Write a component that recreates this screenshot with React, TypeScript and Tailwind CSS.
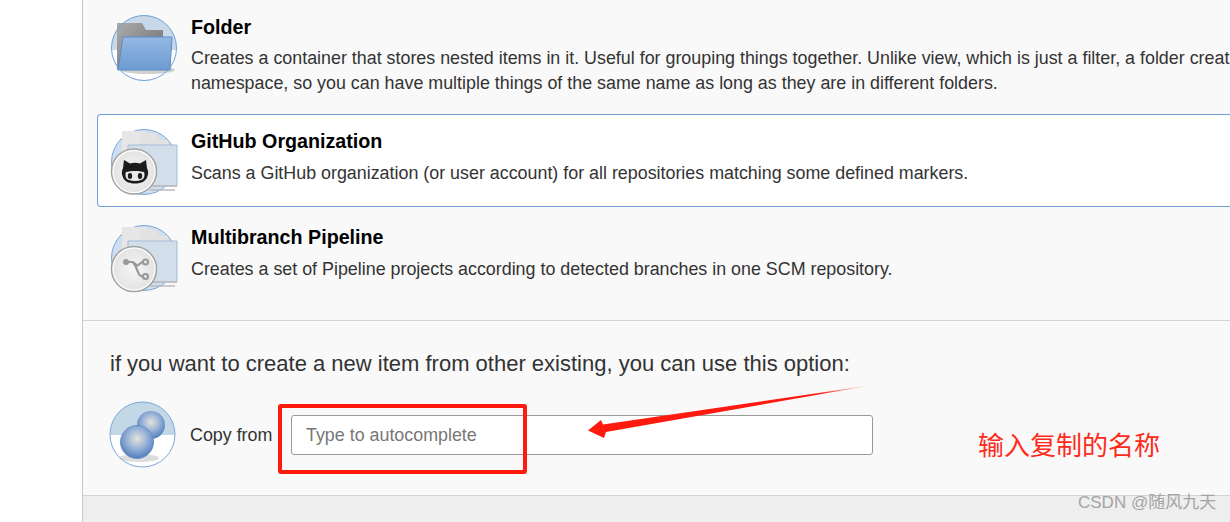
const FONT = "font-['Liberation_Sans',Arial,sans-serif]";

function FolderIcon() {
  return (
    <svg width="68" height="68" viewBox="0 0 68 68">
      <defs>
        <linearGradient id="fold" x1="0" y1="0" x2="0" y2="1">
          <stop offset="0" stopColor="#94b8e2" />
          <stop offset="1" stopColor="#6d9bd2" />
        </linearGradient>
        <linearGradient id="back" x1="0" y1="0" x2="1" y2="1">
          <stop offset="0" stopColor="#ababab" />
          <stop offset="1" stopColor="#6a6a6a" />
        </linearGradient>
        <clipPath id="c1"><circle cx="34" cy="34" r="32.5" /></clipPath>
      </defs>
      <circle cx="34" cy="34" r="32.5" fill="#fff" />
      <rect x="1" y="1" width="66" height="35" fill="#c9d8e8" clipPath="url(#c1)" />
      <ellipse cx="38" cy="56" rx="27" ry="4" fill="#d0d0d0" />
      <path d="M7 9h25l4 7h17v8H16L12 56H7z" fill="url(#back)" />
      <path d="M13 23h49l-2 33H8z" fill="url(#fold)" stroke="#5b8cc6" />
      <circle cx="34" cy="34" r="32.5" fill="none" stroke="#6f9fd3" />
    </svg>
  );
}

function BadgeFolder({ id, cy, children }: { id: string; cy: number; children: React.ReactNode }) {
  return (
    <svg width="70" height="70" viewBox="0 0 70 70">
      <defs>
        <radialGradient id={id} cx="0.5" cy="0.5" r="0.6">
          <stop offset="0" stopColor="#f6f6f6" />
          <stop offset="1" stopColor="#e0e0e0" />
        </radialGradient>
      </defs>
      <circle cx="34" cy="34" r="32.5" fill="#cfdff0" stroke="#7aa6d6" />
      <rect x="12" y="3" width="24" height="26" fill="#e6e6e6" />
      <path d="M30 5h15l5 7h8v20H30z" fill="#e2e2e2" />
      <path d="M18 17h49v41H18z" fill="#d3deeb" stroke="#a4bcd8" />
      <path d="M40 58h27M40 62h25" stroke="#bbb" strokeWidth="1.5" />
      <circle cx="24" cy={cy} r="22.500" fill="#fff" stroke="#a2a2a2" strokeWidth="1.500" />
      <circle cx="24" cy={cy} r="20.500" fill={`url(#${id})`} />
      {children}
    </svg>
  );
}

function SpheresIcon() {
  return (
    <svg width="67" height="67" viewBox="0 0 67 67" className="-ml-px shrink-0">
      <defs>
        <radialGradient id="ball" cx="0.5" cy="0.4" r="0.6">
          <stop offset="0" stopColor="#e4e4da" />
          <stop offset="0.5" stopColor="#9ab4d8" />
          <stop offset="1" stopColor="#4f7dbd" />
        </radialGradient>
        <clipPath id="c2"><circle cx="33.5" cy="33.5" r="32.5" /></clipPath>
      </defs>
      <circle cx="33.5" cy="33.5" r="32.5" fill="#fff" />
      <rect x="0" y="0" width="67" height="34" fill="#c3d8e6" clipPath="url(#c2)" />
      <ellipse cx="30" cy="57" rx="20" ry="4" fill="#ddd" />
      <circle cx="42" cy="24" r="14" fill="url(#ball)" />
      <circle cx="28" cy="41" r="16.5" fill="url(#ball)" stroke="#6d93c8" />
      <circle cx="33.5" cy="33.5" r="32.5" fill="none" stroke="#7aa6d6" />
    </svg>
  );
}

function Row({
  icon,
  title,
  selected,
  className,
  iconClass,
  descClass,
  children,
}: {
  icon: React.ReactNode;
  title: string;
  selected?: boolean;
  className: string;
  iconClass: string;
  descClass: string;
  children: React.ReactNode;
}) {
  return (
    <div
      className={`flex ${className} ${
        selected ? 'rounded-l-[4px] border border-r-0 border-[#6f9fd3] bg-white pl-[12px]' : 'pl-[13px]'
      }`}
    >
      <div className={`h-[70px] w-[81px] shrink-0 ${iconClass}`}>{icon}</div>
      <div className="min-w-0 flex-1 overflow-hidden whitespace-nowrap">
        <div className="text-[19.7px] leading-[24px] font-bold text-black">{title}</div>
        <div className={`text-[17.88px] leading-[25px] text-[#333] ${descClass}`}>{children}</div>
      </div>
    </div>
  );
}

export default function App() {
  return (
    <div className={`relative flex h-[522px] w-[1230px] overflow-hidden bg-white ${FONT}`}>
      <div className="w-[83px] shrink-0 border-r border-[#c8c8c8]" />
      <div className="flex min-w-0 flex-1 flex-col bg-[#f9f9f9]">
        <div className="h-[321px] border-b border-[#d3d3d3] pl-[14px]">
          <Row className="h-[114px] pt-[15px]" iconClass="-mt-[1px]" descClass="mt-[7px]" title="Folder" icon={<FolderIcon />}>
            <div className="overflow-hidden">
              Creates a container that stores nested items in it. Useful for grouping things together. Unlike view, which is just a filter, a folder creat
            </div>
            namespace, so you can have multiple things of the same name as long as they are in different folders.
          </Row>
          <Row selected className="h-[93px] pt-[14px]" iconClass="-mt-[1px]" descClass="mt-[8px]" title="GitHub Organization"
            icon={
              <BadgeFolder id="gh" cy={43.5}>
                {/* octocat head */}
                <path
                  d="M14 32l6 3.500c3-1 7-1 10 0l6-3.500 1 8c1.500 3 1.500 6 .5 8-1 5-6 7.500-12.500 7.500S13.500 53 12.500 48c-1-2-1-5 .5-8z"
                  fill="#1c1c1c"
                />
                <path d="M16 44c5-1.500 13-1.500 18 0 1.500 4-.5 8-3 8-3.500 1.200-8.500 1.200-12 0-2.500 0-4.500-4-3-8z" fill="#e8e8e8" />
                <ellipse cx="20" cy="48" rx="2.200" ry="3" fill="#1c1c1c" />
                <ellipse cx="30" cy="48" rx="2.200" ry="3" fill="#1c1c1c" />
              </BadgeFolder>
            }
          >
            Scans a GitHub organization (or user account) for all repositories matching some defined markers.
          </Row>
          <Row className="h-[113px] pt-[18px]" iconClass="-mt-[1px]" descClass="mt-[8px]" title="Multibranch Pipeline"
            icon={
              <BadgeFolder id="mb" cy={45}>
                <g fill="none" stroke="#999" strokeWidth="2.200">
                  <path d="M16 38h6c3 0 3.500 3 5 3.500 2 .5 3-3.500 6-3.500" />
                  <path d="M22 38c3 1 4 6 6 10 1 3 3 4.500 5 4.500" />
                  <circle cx="35.500" cy="38" r="2.500" />
                  <circle cx="35.500" cy="52.500" r="2.500" />
                </g>
                <circle cx="16" cy="38" r="3" fill="#999" />
              </BadgeFolder>
            }
          >
            Creates a set of Pipeline projects according to detected branches in one SCM repository.
          </Row>
        </div>
        <div className="h-[175px] border-b border-[#d3d3d3] pt-[30px] pl-[27px]">
          <div className="text-[22px] leading-[26px] text-[#333]">
            if you want to create a new item from other existing, you can use this option:
          </div>
          <div className="mt-[24px] flex items-center">
            <SpheresIcon />
            <span className="ml-[14px] w-[101px] text-[17.88px] leading-[24px] text-[#333]">Copy from</span>
            <div className="flex h-[40px] w-[582px] items-center rounded-[3px] border border-[#999] bg-white pt-px pl-[14px] text-[17.88px] text-[#777]">
              Type to autocomplete
            </div>
          </div>
        </div>
        <div className="flex-1 bg-[#eeeeee]" />
      </div>

      {/* red annotations pasted over the screenshot */}
      <div className="absolute top-[404px] left-[278px] h-[70px] w-[249px] rounded-[3px] border-[4px] border-[#ff1a10]" />
      <svg className="absolute top-[380px] left-[580px]" width="300" height="60" viewBox="0 0 300 60">
        <defs>
          <linearGradient id="arrow" x1="0" y1="0" x2="1" y2="0">
            <stop offset="0" stopColor="#ff1a10" />
            <stop offset="0.8" stopColor="#ff1a10" />
            <stop offset="1" stopColor="#ff1a10" stopOpacity="0.1" />
          </linearGradient>
        </defs>
        <path d="M8 50.500L21 40l2 4.500L293 5 26 52l-2 6z" fill="url(#arrow)" />
      </svg>
      <div className="absolute top-[427px] left-[978px] text-[26px] leading-[34px] text-[#ff2a1a] font-['Noto_Sans_CJK_SC',sans-serif]">
        输入复制的名称
      </div>
      <div className="absolute top-[491px] left-[1078px] text-[17px] leading-[24px] text-[#a4a4a4] font-['Liberation_Sans','Noto_Sans_CJK_SC',sans-serif]">
        CSDN @随风九天
      </div>
    </div>
  );
}
